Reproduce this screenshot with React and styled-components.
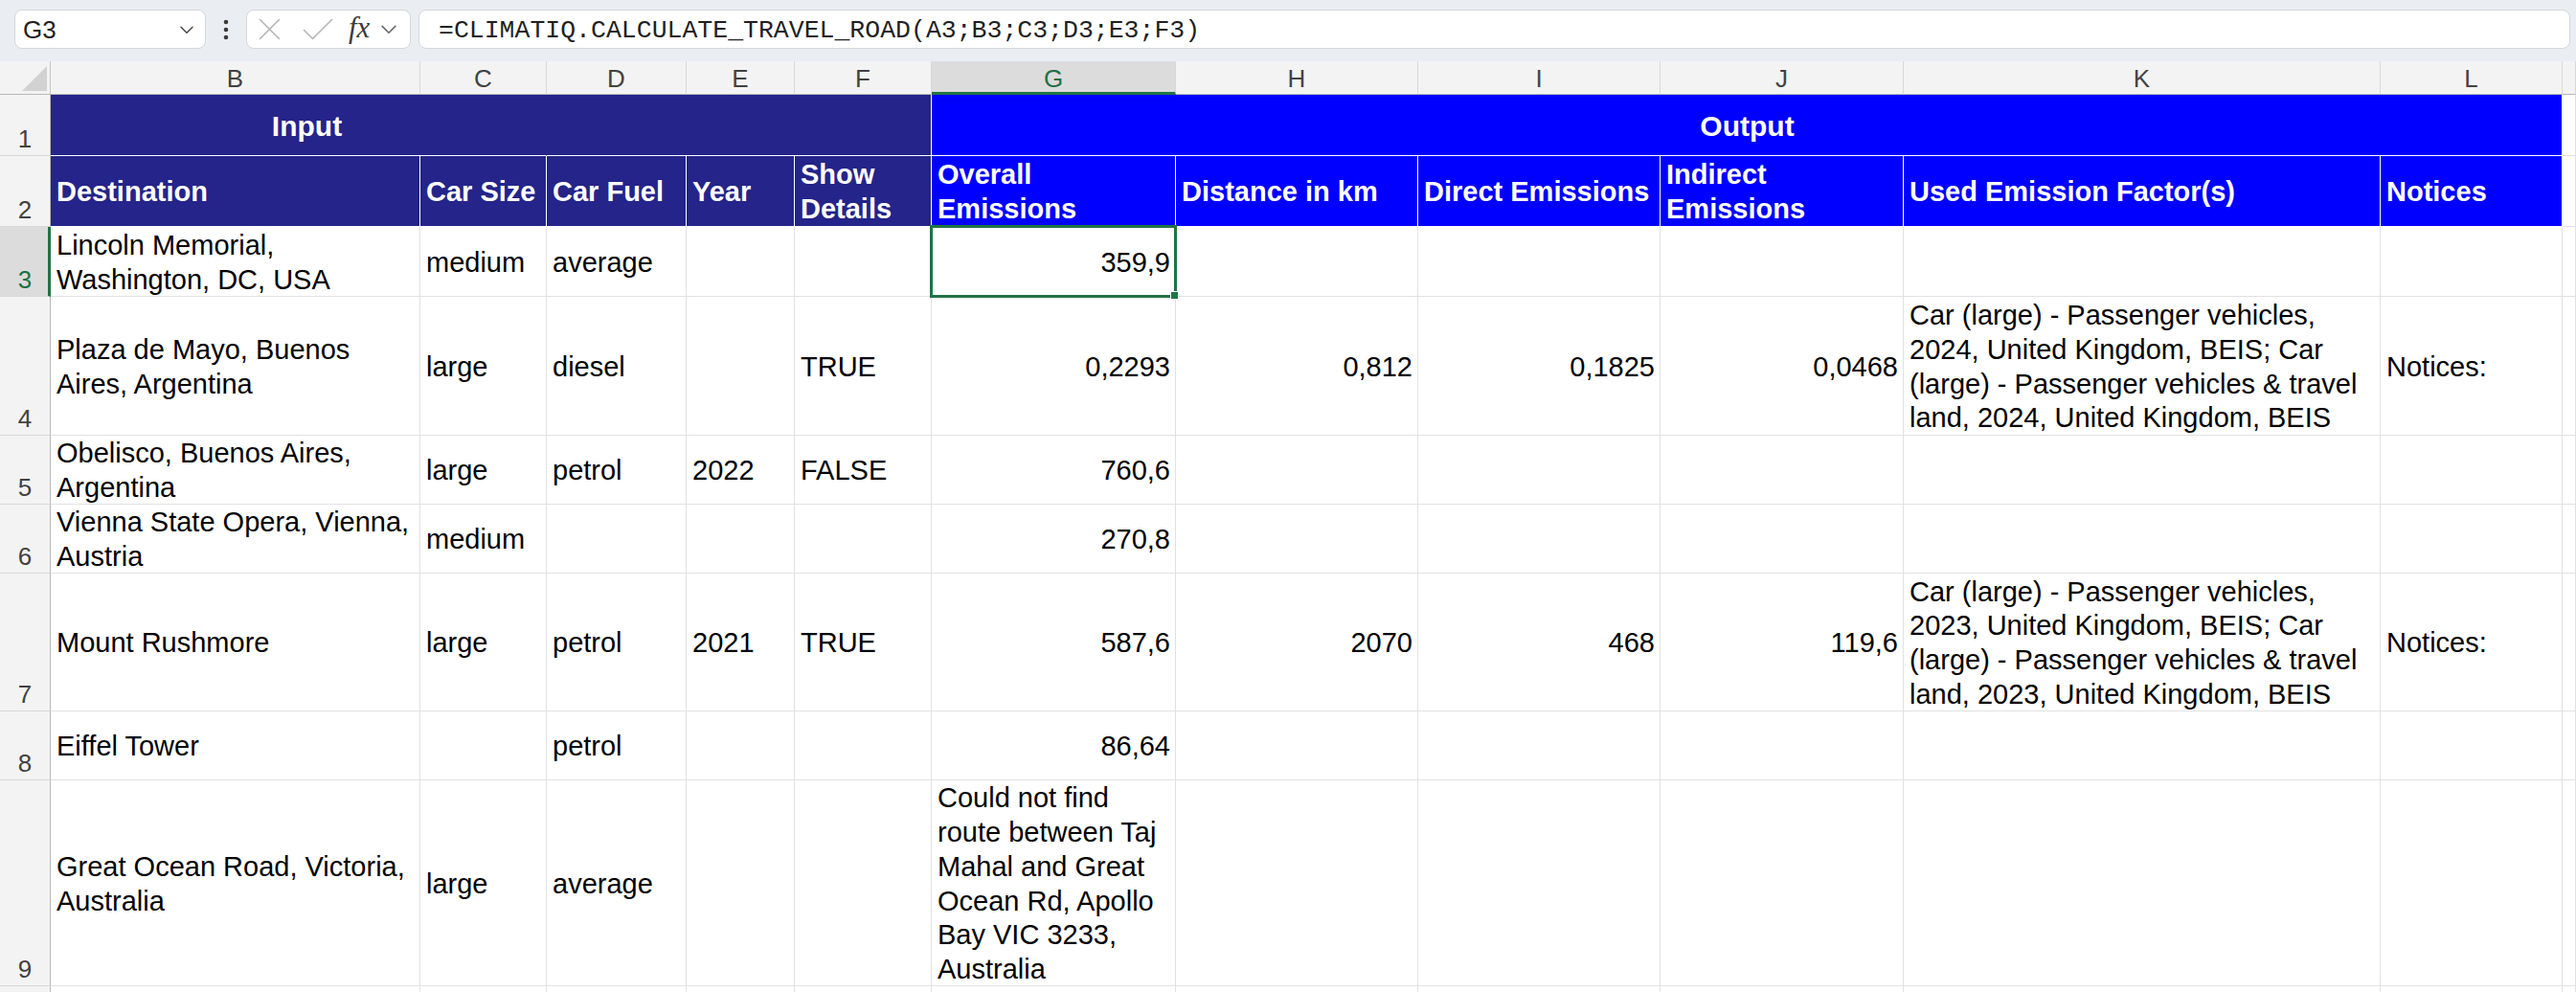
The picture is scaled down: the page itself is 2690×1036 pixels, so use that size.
import React from 'react';
import styled, { createGlobalStyle } from 'styled-components';

const GlobalStyle = createGlobalStyle`
  html, body {
    margin: 0;
    padding: 0;
    background: #ffffff;
  }

  body {
    width: 2690px;
    height: 1036px;
    overflow: hidden;
    font-family: "Liberation Sans", Arial, sans-serif;
  }

  *, *::before, *::after {
    box-sizing: border-box;
  }
`;

const Window = styled.div`
  width: 2690px;
  height: 1036px;
  display: flex;
  flex-direction: column;
  overflow: hidden;
  background: #ffffff;
`;

const FormulaBar = styled.div`
  flex: none;
  height: 64px;
  display: flex;
  align-items: flex-start;
  padding: 10px 6px 0 15px;
  background: #eaeef2;
`;

const Box = styled.div`
  height: 41px;
  display: flex;
  align-items: center;
  background: #ffffff;
  border: 1px solid #d3d7db;
  border-radius: 8px;
`;

const NameBox = styled(Box)`
  width: 200px;
  justify-content: space-between;
  padding: 2px 12px 0 8px;
  font-size: 26px;
  color: #1f1f1f;
`;

const MoreButton = styled.div`
  width: 42px;
  height: 41px;
  display: flex;
  align-items: center;
  justify-content: center;
`;

const FunctionBox = styled(Box)`
  width: 172px;
  padding-left: 12px;
`;

const FxLabel = styled.span`
  margin-left: 16px;
  font-family: "Liberation Serif", "Times New Roman", serif;
  font-style: italic;
  font-size: 31px;
  line-height: 1;
  color: #3b3b3b;
  padding-bottom: 4px;
`;

const FormulaInput = styled(Box)`
  flex: 1;
  margin-left: 8px;
  padding: 2px 0 0 20px;
  font-family: "Liberation Mono", "DejaVu Sans Mono", monospace;
  font-size: 26.5px;
  color: #1f1f1f;
`;

const Sheet = styled.div`
  flex: none;
  display: grid;
  grid-template-columns: 53px 386px 132px 146px 113px 143px 255px 253px 253px 254px 498px 190px 1fr;
  grid-template-rows: 35px 64px 74px 73px 145px 72px 72px 144px 72px 215px 40px;
  font-family: "Liberation Sans", Arial, sans-serif;
  font-size: 29px;
  line-height: 35.7px;
  color: #000000;
`;

const Corner = styled.div`
  display: flex;
  align-items: flex-end;
  justify-content: flex-end;
  padding: 0 3px 3px 0;
  background: #f3f3f3;
  border-right: 1px solid #c4c4c4;
  border-bottom: 1px solid #b8b8b8;
`;

const ColumnHeader = styled.div`
  display: flex;
  align-items: center;
  justify-content: center;
  padding-top: ${(p) => (p.$selected ? '4px' : '2px')};
  background: ${(p) => (p.$selected ? '#dcdcdc' : '#f3f3f3')};
  border-right: 1px solid #d8d8d8;
  border-bottom: ${(p) => (p.$selected ? '3px solid #217346' : '1px solid #b8b8b8')};
  color: ${(p) => (p.$selected ? '#1e7145' : '#424242')};
  font-size: 26px;
  line-height: 30px;
`;

const RowHeader = styled.div`
  display: flex;
  align-items: flex-end;
  justify-content: center;
  padding-bottom: 2px;
  padding-left: ${(p) => (p.$selected ? '2px' : '0')};
  background: ${(p) => (p.$selected ? '#dcdcdc' : '#f3f3f3')};
  border-bottom: 1px solid #d8d8d8;
  border-right: ${(p) => (p.$selected ? '3px solid #217346' : '1px solid #b8b8b8')};
  color: ${(p) => (p.$selected ? '#1e7145' : '#424242')};
  font-size: 26px;
  line-height: 30px;
`;

const Cell = styled.div`
  position: relative;
  display: flex;
  align-items: center;
  justify-content: ${(p) => (p.$align === 'right' ? 'flex-end' : p.$align === 'center' ? 'center' : 'flex-start')};
  grid-column: ${(p) => (p.$span ? `span ${p.$span}` : 'auto')};
  padding: 3px 5px 0 6px;
  text-align: ${(p) => p.$align || 'left'};
  white-space: pre-line;
  border-right: 1px solid #e1e1e1;
  border-bottom: 1px solid #e1e1e1;
`;

const HeadCell = styled(Cell)`
  background: ${(p) => (p.$tone === 'input' ? '#24248a' : '#0000ff')};
  color: #ffffff;
  font-weight: bold;
  border-color: #ffffff;
  border-right-color: ${(p) => (p.$seamless ? 'transparent' : '#ffffff')};
`;

const TitleCell = styled(HeadCell)`
  font-size: 30px;
  padding-left: ${(p) => (p.$tone === 'input' ? '23px' : '6px')};
`;

const Selection = styled.span`
  position: absolute;
  top: -2px;
  left: -2px;
  right: -2px;
  bottom: -2px;
  z-index: 2;
  border: 3px solid #217346;
  pointer-events: none;

  &::after {
    content: '';
    position: absolute;
    right: -5px;
    bottom: -5px;
    width: 9px;
    height: 9px;
    background: #217346;
    border: 1px solid #ffffff;
  }
`;

const LETTERS = ['B', 'C', 'D', 'E', 'F', 'G', 'H', 'I', 'J', 'K', 'L', ''];
const DATA_COLS = ['B', 'C', 'D', 'E', 'F', 'G', 'H', 'I', 'J', 'K', 'L', 'M'];
const NUMERIC_COLS = ['G', 'H', 'I', 'J'];

const factors = (year) =>
  `Car (large) - Passenger vehicles,\n${year}, United Kingdom, BEIS; Car\n(large) - Passenger vehicles & travel\nland, ${year}, United Kingdom, BEIS`;

const rows = [
  {
    n: 3,
    cells: { B: 'Lincoln Memorial,\nWashington, DC, USA', C: 'medium', D: 'average', G: '359,9' },
  },
  {
    n: 4,
    cells: {
      B: 'Plaza de Mayo, Buenos\nAires, Argentina',
      C: 'large',
      D: 'diesel',
      F: 'TRUE',
      G: '0,2293',
      H: '0,812',
      I: '0,1825',
      J: '0,0468',
      K: factors(2024),
      L: 'Notices:',
    },
  },
  {
    n: 5,
    cells: { B: 'Obelisco, Buenos Aires,\nArgentina', C: 'large', D: 'petrol', E: '2022', F: 'FALSE', G: '760,6' },
  },
  {
    n: 6,
    cells: { B: 'Vienna State Opera, Vienna,\nAustria', C: 'medium', G: '270,8' },
  },
  {
    n: 7,
    cells: {
      B: 'Mount Rushmore',
      C: 'large',
      D: 'petrol',
      E: '2021',
      F: 'TRUE',
      G: '587,6',
      H: '2070',
      I: '468',
      J: '119,6',
      K: factors(2023),
      L: 'Notices:',
    },
  },
  {
    n: 8,
    cells: { B: 'Eiffel Tower', D: 'petrol', G: '86,64' },
  },
  {
    n: 9,
    cells: {
      B: 'Great Ocean Road, Victoria,\nAustralia',
      C: 'large',
      D: 'average',
      G: 'Could not find\nroute between Taj\nMahal and Great\nOcean Rd, Apollo\nBay VIC 3233,\nAustralia',
    },
  },
  // row 10 only peeks in below the fold, its number is out of view
  { n: 10, hideNumber: true, cells: {} },
];

const headings = [
  { col: 'B', text: 'Destination', tone: 'input' },
  { col: 'C', text: 'Car Size', tone: 'input' },
  { col: 'D', text: 'Car Fuel', tone: 'input' },
  { col: 'E', text: 'Year', tone: 'input' },
  { col: 'F', text: 'Show\nDetails', tone: 'input' },
  { col: 'G', text: 'Overall\nEmissions', tone: 'output' },
  { col: 'H', text: 'Distance in km', tone: 'output' },
  { col: 'I', text: 'Direct Emissions', tone: 'output' },
  { col: 'J', text: 'Indirect\nEmissions', tone: 'output' },
  { col: 'K', text: 'Used Emission Factor(s)', tone: 'output' },
  { col: 'L', text: 'Notices', tone: 'output' },
];

const Chevron = ({ width = 14, color = '#424242' }) => (
  <svg width={width} height={width * 0.6} viewBox="0 0 14 8" fill="none">
    <path d="M1 1l6 6 6-6" stroke={color} strokeWidth="1.4" strokeLinecap="round" strokeLinejoin="round" />
  </svg>
);

const MoreIcon = () => (
  <svg width="6" height="22" viewBox="0 0 6 22">
    <circle cx="3" cy="3" r="2.3" fill="#3c3c3c" />
    <circle cx="3" cy="11" r="2.3" fill="#3c3c3c" />
    <circle cx="3" cy="19" r="2.3" fill="#3c3c3c" />
  </svg>
);

const CancelIcon = () => (
  <svg width="23" height="23" viewBox="0 0 23 23" fill="none">
    <path d="M1.5 1.5l20 20M21.5 1.5l-20 20" stroke="#b4b4b4" strokeWidth="1.6" strokeLinecap="round" />
  </svg>
);

const EnterIcon = () => (
  <svg width="32" height="23" viewBox="0 0 32 23" fill="none" style={{ marginLeft: 23 }}>
    <path d="M1.5 12.5l9 9L30.5 1.5" stroke="#b4b4b4" strokeWidth="1.6" strokeLinecap="round" strokeLinejoin="round" />
  </svg>
);

const CornerTriangle = () => (
  <svg width="26" height="26" viewBox="0 0 26 26">
    <path d="M26 0V26H0Z" fill="#d2d2d2" />
  </svg>
);

const App = () => (
  <Window>
    <GlobalStyle />
    <FormulaBar>
      <NameBox>
        <span>G3</span>
        <Chevron />
      </NameBox>
      <MoreButton>
        <MoreIcon />
      </MoreButton>
      <FunctionBox>
        <CancelIcon />
        <EnterIcon />
        <FxLabel>fx</FxLabel>
        <span style={{ marginLeft: 12, display: 'flex' }}>
          <Chevron width={16} color="#6a6a6a" />
        </span>
      </FunctionBox>
      <FormulaInput>=CLIMATIQ.CALCULATE_TRAVEL_ROAD(A3;B3;C3;D3;E3;F3)</FormulaInput>
    </FormulaBar>

    <Sheet>
      <Corner>
        <CornerTriangle />
      </Corner>
      {LETTERS.map((l, i) => (
        <ColumnHeader key={`h${i}`} $selected={l === 'G'}>
          {l}
        </ColumnHeader>
      ))}

      <RowHeader>1</RowHeader>
      <TitleCell $tone="input" $span={2} $align="center" $seamless>
        Input
      </TitleCell>
      <HeadCell $tone="input" $span={3} />
      <TitleCell $tone="output" $span={6} $align="center">
        Output
      </TitleCell>
      <Cell />

      <RowHeader>2</RowHeader>
      {headings.map((h) => (
        <HeadCell key={h.col} $tone={h.tone}>
          {h.text}
        </HeadCell>
      ))}
      <Cell />

      {rows.map((row) => (
        <React.Fragment key={row.n}>
          <RowHeader $selected={row.n === 3}>{row.hideNumber ? '' : row.n}</RowHeader>
          {DATA_COLS.map((col) => {
            const value = row.cells[col] || '';
            const numeric = NUMERIC_COLS.includes(col) && /^[\d,]+$/.test(value);
            const selected = row.n === 3 && col === 'G';
            return (
              <Cell key={col} $align={numeric ? 'right' : 'left'}>
                {value}
                {selected && <Selection />}
              </Cell>
            );
          })}
        </React.Fragment>
      ))}
    </Sheet>
  </Window>
);

export default App;
